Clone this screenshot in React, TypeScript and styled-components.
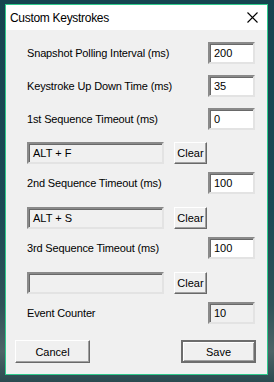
import * as React from 'react';
import styled, { createGlobalStyle, css } from 'styled-components';

const GlobalStyle = createGlobalStyle`
	html, body {
		margin: 0;
		padding: 0;
		width: 274px;
		height: 382px;
		overflow: hidden;
	}
	body {
		font-family: "Liberation Sans", Arial, sans-serif;
		background: linear-gradient(180deg, #164450 0%, #1b4a55 55%, #2f5358 80%, #4d6467 92%, #2a4a50 100%);
	}
`;

const Desktop = styled.div`
	padding: 4px 0 0 5px;
`;

const Window = styled.div`
	width: 261px;
	height: 369px;
	border: 1px solid #2fc98c;
	background: #f0f0f0;
	display: flex;
	flex-direction: column;
`;

const TitleBar = styled.div`
	height: 25px;
	background: #ffffff;
	display: flex;
	align-items: center;
	padding-left: 4px;
	padding-right: 9px;
`;

const Title = styled.div`
	font-size: 12px;
	letter-spacing: -0.3px;
	color: #000;
	flex: 1;
`;

const CloseIcon = () => (
	<svg width="11" height="11" viewBox="0 0 11 11">
		<path d="M0.5 0.5 L10.5 10.5 M10.5 0.5 L0.5 10.5" stroke="#000" strokeWidth="1.1" />
	</svg>
);

const Body = styled.div`
	padding: 12px 12px 0 21px;
	display: flex;
	flex-direction: column;
`;

const Row = styled.div<{ $gap: number }>`
	height: 22px;
	margin-top: ${(p) => p.$gap}px;
	display: flex;
	align-items: center;
`;

const Label = styled.div`
	font-size: 11px;
	letter-spacing: -0.15px;
	color: #000;
	flex: 1;
	white-space: nowrap;
`;

const sunken = css`
	box-sizing: border-box;
	height: 22px;
	border-style: solid;
	border-width: 2px;
	border-color: #8a8a8a #e3e3e3 #e3e3e3 #8a8a8a;
	box-shadow: inset 1px 1px 0 #696969;
	font-size: 11px;
	color: #000;
	padding: 2px 0 0 4px;
	line-height: 14px;
	display: flex;
	align-items: flex-start;
	white-space: nowrap;
`;

const NumberBox = styled.div<{ $readonly?: boolean }>`
	${sunken};
	width: 47px;
	background: ${(p) => (p.$readonly ? '#f0f0f0' : '#ffffff')};
`;

const KeyBox = styled.div`
	${sunken};
	width: 137px;
	background: #f0f0f0;
`;

const ClearButton = styled.div`
	box-sizing: border-box;
	width: 33px;
	height: 22px;
	margin-left: 10px;
	border-style: solid;
	border-width: 1px;
	border-color: #ffffff #696969 #696969 #ffffff;
	box-shadow: inset -1px -1px 0 #a0a0a0;
	background: #f0f0f0;
	font-size: 11px;
	display: flex;
	align-items: center;
	justify-content: center;
	white-space: nowrap;
`;

const Spacer = styled.div`
	flex: 1;
`;

const Footer = styled.div`
	display: flex;
	justify-content: space-between;
	padding: 16px 11px 0 9px;
`;

const DialogButton = styled.div<{ $default?: boolean }>`
	box-sizing: border-box;
	width: 75px;
	height: 23px;
	background: #f0f0f0;
	font-size: 11px;
	display: flex;
	align-items: center;
	justify-content: center;
	border-style: solid;
	border-width: 1px;
	border-color: #ffffff #696969 #696969 #ffffff;
	box-shadow: inset -1px -1px 0 #a0a0a0;
	${(p) =>
		p.$default &&
		css`
			border: 2px solid #6d6d6d;
			box-shadow: inset 1px 1px 0 #ffffff, inset -1px -1px 0 #a0a0a0;
		`}
`;

const timeouts = [
	{ label: 'Snapshot Polling Interval (ms)', value: '200', gap: 0 },
	{ label: 'Keystroke Up Down Time (ms)', value: '35', gap: 11 },
	{ label: '1st Sequence Timeout (ms)', value: '0', gap: 11 },
];

const App: React.FC = () => {
	return (
		<>
			<GlobalStyle />
			<Desktop>
				<Window>
					<TitleBar>
						<Title>Custom Keystrokes</Title>
						<CloseIcon />
					</TitleBar>
					<Body>
						{timeouts.map((t) => (
							<Row key={t.label} $gap={t.gap}>
								<Label>{t.label}</Label>
								<NumberBox>{t.value}</NumberBox>
							</Row>
						))}
						<Row $gap={12}>
							<KeyBox>ALT + F</KeyBox>
							<ClearButton>Clear</ClearButton>
							<Spacer />
						</Row>
						<Row $gap={8}>
							<Label>2nd Sequence Timeout (ms)</Label>
							<NumberBox>100</NumberBox>
						</Row>
						<Row $gap={13}>
							<KeyBox>ALT + S</KeyBox>
							<ClearButton>Clear</ClearButton>
							<Spacer />
						</Row>
						<Row $gap={8}>
							<Label>3rd Sequence Timeout (ms)</Label>
							<NumberBox>100</NumberBox>
						</Row>
						<Row $gap={13}>
							<KeyBox />
							<ClearButton>Clear</ClearButton>
							<Spacer />
						</Row>
						<Row $gap={8}>
							<Label>Event Counter</Label>
							<NumberBox $readonly>10</NumberBox>
						</Row>
					</Body>
					<Footer>
						<DialogButton>Cancel</DialogButton>
						<DialogButton $default>Save</DialogButton>
					</Footer>
				</Window>
			</Desktop>
		</>
	);
};

export default App;
